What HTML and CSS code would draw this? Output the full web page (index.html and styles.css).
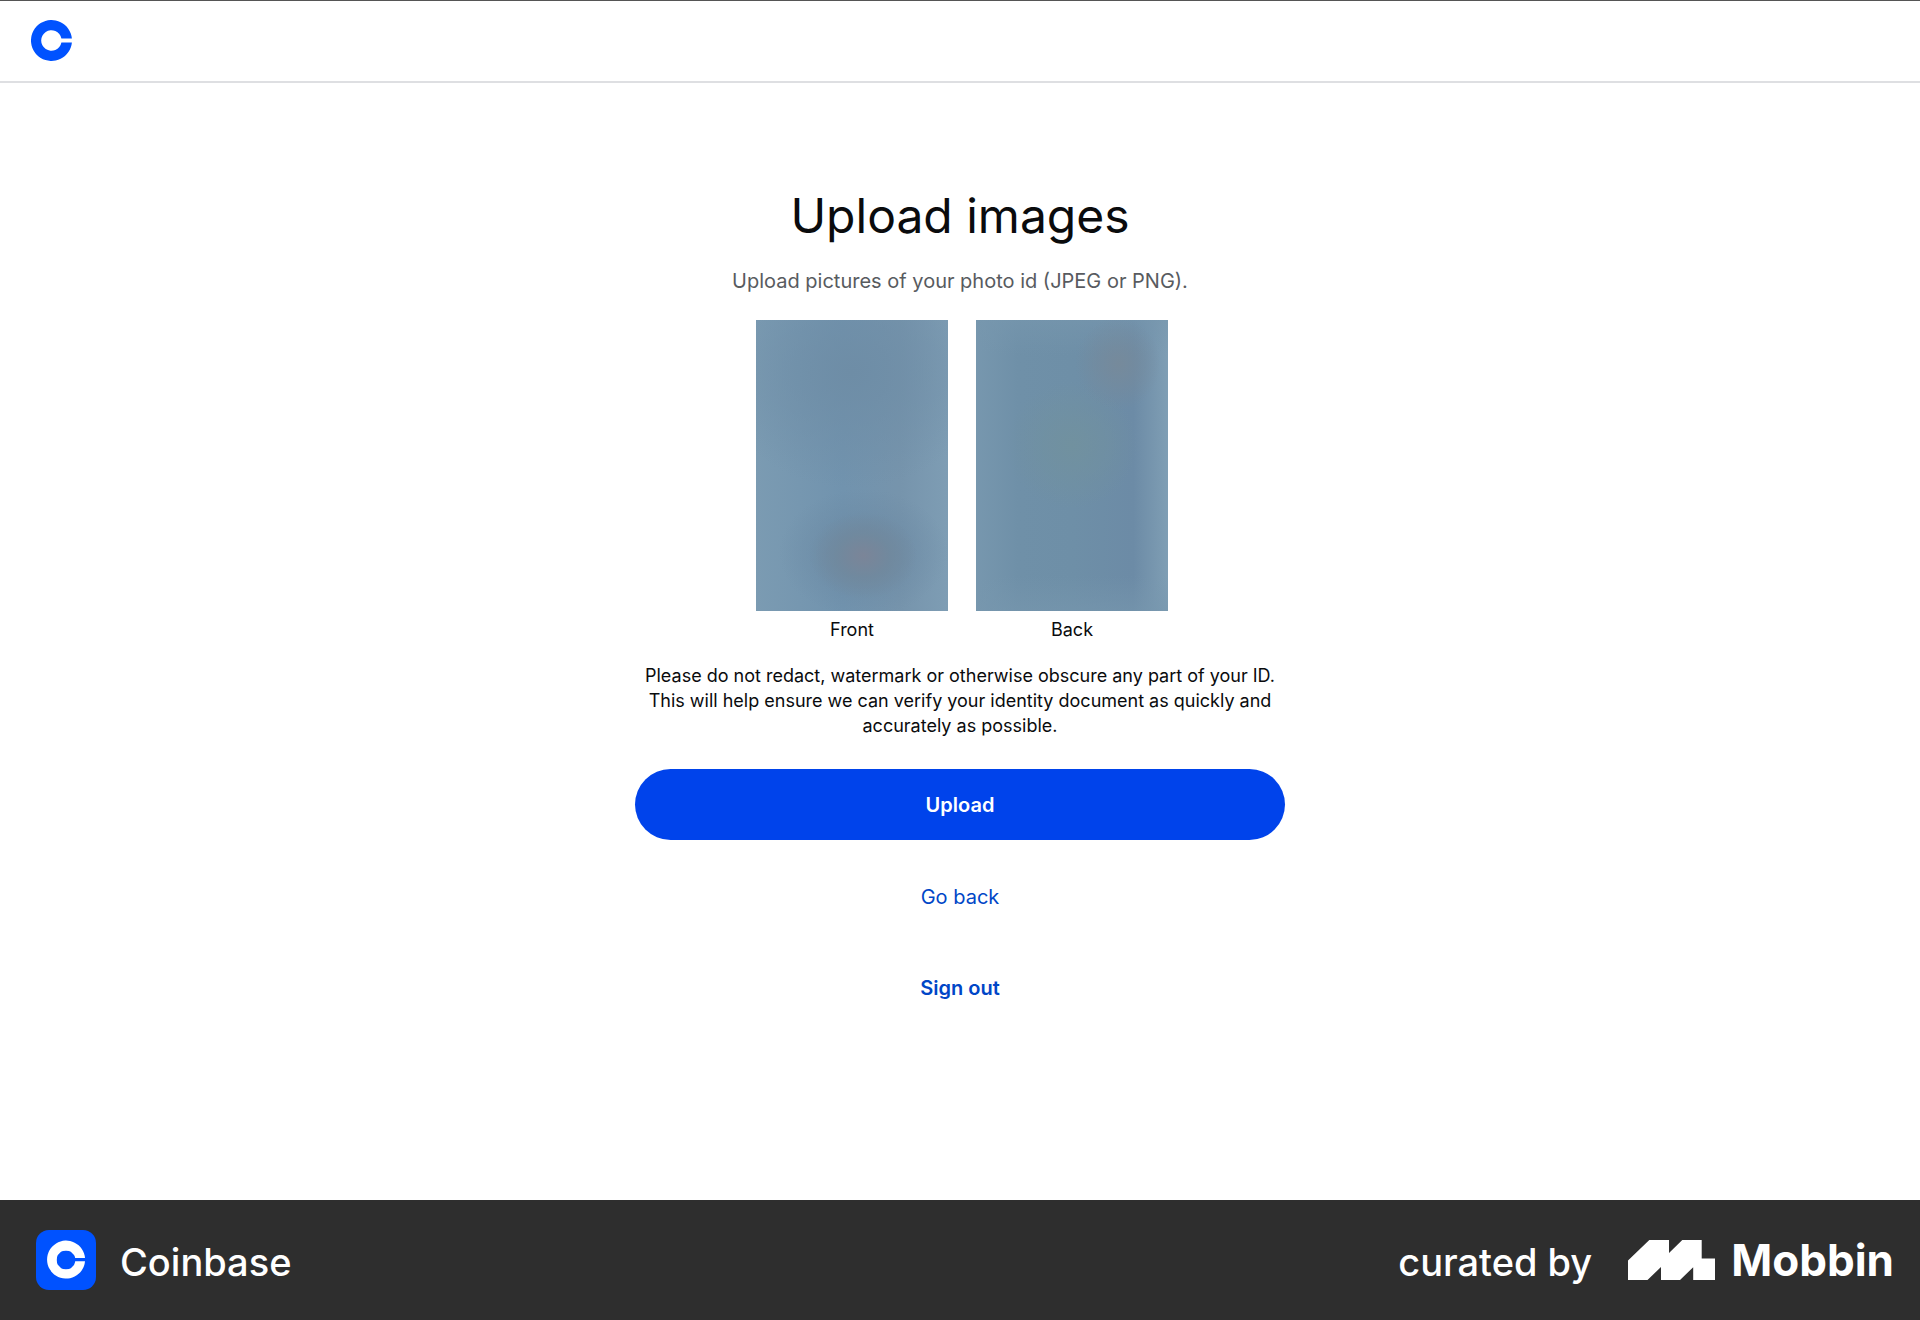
FILE: index.html
```html
<!DOCTYPE html>
<html lang="en">
<head>
  <meta charset="utf-8">
  <meta name="viewport" content="width=device-width, initial-scale=1">
  <title>Upload images - Coinbase</title>
  <link rel="stylesheet" href="styles.css">
</head>
<body>
  <header class="topbar">
    <a class="home-link" href="#" aria-label="Coinbase home">
      <svg class="home-logo" viewBox="0 0 41 41" aria-hidden="true">
        <path d="M40.9 18.6A20.5 20.5 0 1 0 40.9 22.4H30.4A10.2 10.2 0 1 1 30.4 18.6Z"/>
      </svg>
    </a>
  </header>

  <main class="content">
    <h1 class="title">Upload images</h1>
    <p class="subtitle">Upload pictures of your photo id (JPEG or PNG).</p>
    <div class="photos">
      <figure class="photo">
        <div class="preview preview-front"></div>
        <figcaption class="caption">Front</figcaption>
      </figure>
      <figure class="photo">
        <div class="preview preview-back"></div>
        <figcaption class="caption">Back</figcaption>
      </figure>
    </div>
    <p class="notice">Please do not redact, watermark or otherwise obscure any part of your ID. This will help ensure we can verify your identity document as quickly and accurately as possible.</p>
    <button class="upload" type="button">Upload</button>
    <a class="link" href="#">Go back</a>
    <a class="link link-strong" href="#">Sign out</a>
  </main>

  <footer class="footer">
    <div class="brand">
      <svg class="app-icon" viewBox="0 0 60 60" aria-hidden="true">
        <rect width="60" height="60" rx="13" fill="#0052ff"/>
        <path fill="#fff" d="M49 28A19 19 0 1 0 49 31.2H39.2Q38.8 33.4 38 35L34.8 38.2Q33.6 39.2 30 39.2Q26.4 39.2 25.2 38.2L21.8 34.8Q20.8 33.6 20.8 30Q20.8 26.4 21.8 25L25 21.8Q26.4 20.8 30 20.8Q33.6 20.8 34.8 21.8L38 25Q38.8 26 39.2 28Z"/>
      </svg>
      <span class="wordmark">Coinbase</span>
    </div>
    <div class="credit">
      <span class="wordmark">curated by</span>
      <a class="mobbin" href="#">
        <svg class="mobbin-mark" viewBox="0 0 87 40" aria-hidden="true">
          <path d="M0 20.5 21.3 0H41V13L54.3 0H73.7V18.5H87V40H65.2V27.2L52 40H33V27L19.5 40H0Z"/>
        </svg>
        <span>Mobbin</span>
      </a>
    </div>
  </footer>
</body>
</html>
```

FILE: styles.css
```css
* {
  box-sizing: border-box;
}

body {
  margin: 0;
  min-height: 100vh;
  display: flex;
  flex-direction: column;
  background: #fff;
  color: #0a0b0d;
  font-family: Inter, "Liberation Sans", sans-serif;
}

.topbar {
  display: flex;
  align-items: center;
  height: 83px;
  padding: 0 31px 1px;
  border-top: 1px solid #555;
  border-bottom: 2px solid #dedfe2;
}

.home-link,
.home-logo {
  display: block;
  width: 41px;
  height: 41px;
}

.home-logo {
  fill: #0052ff;
}

.content {
  flex: 1;
  display: flex;
  flex-direction: column;
  align-items: center;
  width: 100%;
  max-width: 650px;
  margin: 0 auto;
  padding: 101px 0 48px;
  text-align: center;
}

.title {
  margin: 0;
  font-size: 48px;
  line-height: 64px;
  font-weight: 400;
}

.subtitle {
  margin: 20px 0 0;
  font-size: 20px;
  line-height: 26px;
  color: #585b60;
}

.photos {
  display: flex;
  gap: 28px;
  margin-top: 26px;
  padding-left: 4px;
}

.photo {
  width: 192px;
  margin: 0;
}

.preview {
  height: 291px;
  margin-bottom: 6px;
}

.preview-front {
  background:
    radial-gradient(ellipse 28% 15% at 56% 81%, #7b8598 0%, #71889cc0 50%, #6d8aa300 100%),
    radial-gradient(ellipse 44% 22% at 56% 80%, #6b89a3 0%, #6b89a300 100%),
    radial-gradient(ellipse 70% 40% at 50% 18%, #6e8da6 0%, #6e8da600 100%),
    linear-gradient(90deg, #7b9bb2, #7193ae 45%, #7694ac 75%, #7e9db4);
}

.preview-back {
  background:
    radial-gradient(ellipse 22% 16% at 74% 15%, #768a9b 0%, #768a9b00 100%),
    radial-gradient(ellipse 34% 22% at 50% 43%, #71919f 0%, #71919f00 100%),
    linear-gradient(180deg, #7797ae99, #7797ae00 12% 88%, #7797ae99),
    linear-gradient(90deg, #7797ae, #6f90a8 22%, #6e8fa7 50%, #6c8ba6 82%, #7f9eb4);
}

.caption,
.notice {
  font-size: 18px;
  line-height: 25px;
}

.notice {
  margin: 21px 0 0;
}

.upload {
  width: 100%;
  height: 71px;
  margin: 31px 0 43px;
  border: 0;
  border-radius: 36px;
  background: #0043eb;
  color: #fff;
  font: inherit;
  font-size: 20px;
  font-weight: 600;
}

.link {
  margin-bottom: 63px;
  color: #0046c7;
  font-size: 20px;
  line-height: 28px;
  text-decoration: none;
}

.link-strong {
  font-weight: 600;
}

.footer {
  display: flex;
  align-items: center;
  justify-content: space-between;
  min-height: 120px;
  padding: 0 26px 0 36px;
  background: #2e2e2e;
  color: #fff;
  font-size: 38px;
  line-height: 48px;
  font-weight: 500;
}

.wordmark {
  padding-top: 4px;
}

.brand,
.credit,
.mobbin {
  display: flex;
  align-items: center;
}

.brand {
  gap: 24px;
}

.credit {
  gap: 36px;
}

.app-icon {
  width: 60px;
  height: 60px;
}

.mobbin {
  gap: 16px;
  color: #fff;
  font-size: 44px;
  font-weight: 700;
  text-decoration: none;
}

.mobbin-mark {
  width: 87px;
  height: 40px;
  fill: #fff;
}
```
